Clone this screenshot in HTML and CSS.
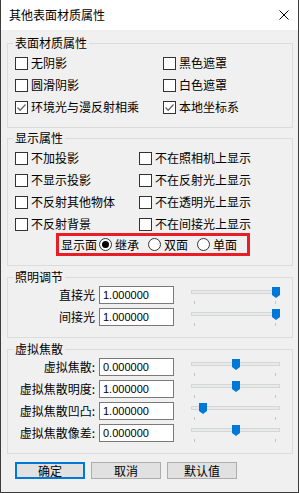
FILE: index.html
```html
<!DOCTYPE html>
<html lang="zh">
<head>
    <meta charset="UTF-8">
    <title>其他表面材质属性</title>
    <link rel="stylesheet" href="styles.css">
</head>
<body>
    <div class="window">
        <!-- Title bar -->
        <div class="titlebar">
            <span class="title">其他表面材质属性</span>
            <svg class="close" width="10" height="10" viewBox="0 0 10 10">
                <path d="M0.5 0.5 L9.5 9.5 M9.5 0.5 L0.5 9.5" stroke="#000" stroke-width="1" fill="none"/>
            </svg>
        </div>

        <div class="content">
            <!-- Surface material -->
            <fieldset class="group g-surface">
                <legend>表面材质属性</legend>
                <div class="check-grid surface-grid">
                    <label class="check"><span class="box"></span>无阴影</label>
                    <label class="check"><span class="box"></span>黑色遮罩</label>
                    <label class="check"><span class="box"></span>圆滑阴影</label>
                    <label class="check"><span class="box"></span>白色遮罩</label>
                    <label class="check"><span class="box checked"><svg width="11" height="11" viewBox="0 0 11 11"><path d="M1.5 5.5 L4.2 8.2 L9.5 2.5" stroke="#666" stroke-width="1.3" fill="none"/></svg></span>环境光与漫反射相乘</label>
                    <label class="check"><span class="box checked"><svg width="11" height="11" viewBox="0 0 11 11"><path d="M1.5 5.5 L4.2 8.2 L9.5 2.5" stroke="#666" stroke-width="1.3" fill="none"/></svg></span>本地坐标系</label>
                </div>
            </fieldset>

            <!-- Display -->
            <fieldset class="group g-display">
                <legend>显示属性</legend>
                <div class="check-grid display-grid">
                    <label class="check"><span class="box"></span>不加投影</label>
                    <label class="check"><span class="box"></span>不在照相机上显示</label>
                    <label class="check"><span class="box"></span>不显示投影</label>
                    <label class="check"><span class="box"></span>不在反射光上显示</label>
                    <label class="check"><span class="box"></span>不反射其他物体</label>
                    <label class="check"><span class="box"></span>不在透明光上显示</label>
                    <label class="check"><span class="box"></span>不反射背景</label>
                    <label class="check"><span class="box"></span>不在间接光上显示</label>
                </div>
                <div class="radio-row">
                    <span class="radio-label">显示面</span>
                    <label class="radio-item"><span class="radio on"></span>继承</label>
                    <label class="radio-item"><span class="radio"></span>双面</label>
                    <label class="radio-item"><span class="radio"></span>单面</label>
                </div>
            </fieldset>

            <!-- Lighting -->
            <fieldset class="group g-light">
                <legend>照明调节</legend>
                <div class="field-row">
                    <span class="field-label">直接光</span>
                    <div class="num">1.000000</div>
                    <div class="slider"><div class="track"></div><span class="tick t-min"></span><span class="tick t-max"></span><svg class="thumb" style="left:81px" width="8" height="11" viewBox="0 0 8 11"><path d="M0 0 H8 V8 L4 11 L0 8 Z" fill="#0078d7"/></svg></div>
                </div>
                <div class="field-row">
                    <span class="field-label">间接光</span>
                    <div class="num">1.000000</div>
                    <div class="slider"><div class="track"></div><span class="tick t-min"></span><span class="tick t-max"></span><svg class="thumb" style="left:81px" width="8" height="11" viewBox="0 0 8 11"><path d="M0 0 H8 V8 L4 11 L0 8 Z" fill="#0078d7"/></svg></div>
                </div>
            </fieldset>

            <!-- Caustics -->
            <fieldset class="group g-caustic">
                <legend>虚拟焦散</legend>
                <div class="field-row">
                    <span class="field-label">虚拟焦散:</span>
                    <div class="num">0.000000</div>
                    <div class="slider"><div class="track"></div><span class="tick t-min"></span><span class="tick t-max"></span><svg class="thumb" style="left:41px" width="8" height="11" viewBox="0 0 8 11"><path d="M0 0 H8 V8 L4 11 L0 8 Z" fill="#0078d7"/></svg></div>
                </div>
                <div class="field-row">
                    <span class="field-label">虚拟焦散明度:</span>
                    <div class="num">1.000000</div>
                    <div class="slider"><div class="track"></div><span class="tick t-min"></span><span class="tick t-max"></span><svg class="thumb" style="left:41px" width="8" height="11" viewBox="0 0 8 11"><path d="M0 0 H8 V8 L4 11 L0 8 Z" fill="#0078d7"/></svg></div>
                </div>
                <div class="field-row">
                    <span class="field-label">虚拟焦散凹凸:</span>
                    <div class="num">1.000000</div>
                    <div class="slider"><div class="track"></div><span class="tick t-min"></span><span class="tick t-max"></span><svg class="thumb" style="left:8px" width="8" height="11" viewBox="0 0 8 11"><path d="M0 0 H8 V8 L4 11 L0 8 Z" fill="#0078d7"/></svg></div>
                </div>
                <div class="field-row">
                    <span class="field-label">虚拟焦散像差:</span>
                    <div class="num">0.000000</div>
                    <div class="slider"><div class="track"></div><span class="tick t-min"></span><span class="tick t-max"></span><svg class="thumb" style="left:41px" width="8" height="11" viewBox="0 0 8 11"><path d="M0 0 H8 V8 L4 11 L0 8 Z" fill="#0078d7"/></svg></div>
                </div>
            </fieldset>

            <!-- Buttons -->
            <div class="buttons">
                <button class="btn default">确定</button>
                <button class="btn">取消</button>
                <button class="btn">默认值</button>
            </div>
        </div>
    </div>
</body>
</html>
```

FILE: styles.css
```css
/* General */
body {
    margin: 0;
    font-family: "Noto Sans CJK SC", "Noto Sans", sans-serif;
    font-size: 12px;
    color: #000;
    background: #fff;
}

.window {
    width: 299px;
    height: 493px;
    box-sizing: border-box;
    border: 1px solid #3c3c3c;
    border-top: none;
    background: #f0f0f0;
    display: flex;
    flex-direction: column;
}

/* Title bar */
.titlebar {
    height: 30px;
    flex-shrink: 0;
    background: #fff;
    display: flex;
    align-items: center;
    justify-content: space-between;
    padding: 0 9px 0 8px;
    line-height: 12px;
}

.close {
    display: block;
}

/* Content */
.content {
    padding: 7px 5px 0 6px;
    display: flex;
    flex-direction: column;
}

.group {
    margin: 0;
    min-width: 0;
    border: 1px solid #dcdcdc;
    padding: 3px 7px 9px 7px;
}

.group legend {
    padding: 0 2px;
    margin-left: -2px;
    font-size: 12px;
    line-height: 12px;
}

.g-display {
    margin-top: 4px;
}

.g-light,
.g-caustic {
    margin-top: 5px;
    padding-top: 1px;
}

/* Checkboxes */
.check-grid {
    display: grid;
}

.surface-grid {
    grid-template-columns: 148px 1fr;
}

.display-grid {
    grid-template-columns: 124px 1fr;
}

.check {
    height: 22px;
    display: flex;
    align-items: center;
    white-space: nowrap;
    line-height: 12px;
}

.box {
    width: 13px;
    height: 13px;
    box-sizing: border-box;
    border: 1px solid #333;
    background: #fff;
    margin-right: 3px;
    flex-shrink: 0;
    display: flex;
}

.box svg {
    display: block;
}

/* Radio row with red highlight */
.radio-row {
    align-self: flex-start;
    display: flex;
    align-items: center;
    height: 17px;
    width: fit-content;
    margin: -2px 0 0 41px;
    padding: 0 10px 0 2px;
    border: 3px solid #e81d25;
    line-height: 12px;
}

.radio-label {
    margin-right: 2px;
}

.radio-item {
    display: flex;
    align-items: center;
    margin-right: 9px;
}

.radio-item:last-child {
    margin-right: 0;
}

.radio {
    width: 13px;
    height: 13px;
    box-sizing: border-box;
    border: 1px solid #333;
    border-radius: 50%;
    background: #fff;
    margin-right: 3px;
    display: flex;
    align-items: center;
    justify-content: center;
}

.radio.on::after {
    content: "";
    width: 7px;
    height: 7px;
    border-radius: 50%;
    background: #000;
}

/* Number fields with sliders */
.field-row {
    height: 22px;
    display: flex;
    align-items: center;
}

.field-label {
    width: 80px;
    text-align: right;
    margin-right: 4px;
    white-space: nowrap;
    line-height: 12px;
}

.num {
    width: 75px;
    height: 18px;
    box-sizing: border-box;
    border: 1px solid #7a7a7a;
    background: #fff;
    padding-left: 3px;
    font-family: "Liberation Sans", Arial, sans-serif;
    font-size: 11px;
    line-height: 16px;
}

.slider {
    position: relative;
    width: 89px;
    height: 22px;
    margin-left: 17px;
}

.track {
    position: absolute;
    left: 0;
    right: 0;
    top: 6px;
    height: 4px;
    box-sizing: border-box;
    border: 1px solid #d6d6d6;
    background: #e7eaea;
}

.tick {
    position: absolute;
    top: 17px;
    width: 1px;
    height: 3px;
    background: #c4c4c4;
}

.t-min {
    left: 3px;
}

.t-max {
    left: 84px;
}

.thumb {
    position: absolute;
    top: 3px;
    display: block;
}

/* Buttons */
.buttons {
    display: flex;
    gap: 6px;
    margin: 8px 0 0 8px;
}

.btn {
    width: 70px;
    height: 17px;
    box-sizing: border-box;
    border: 1px solid #adadad;
    background: #e1e1e1;
    font-family: "Noto Sans CJK SC", sans-serif;
    font-size: 12px;
    line-height: 12px;
    padding: 0;
    color: #000;
}

.btn.default {
    border: 2px solid #0078d7;
}
```
